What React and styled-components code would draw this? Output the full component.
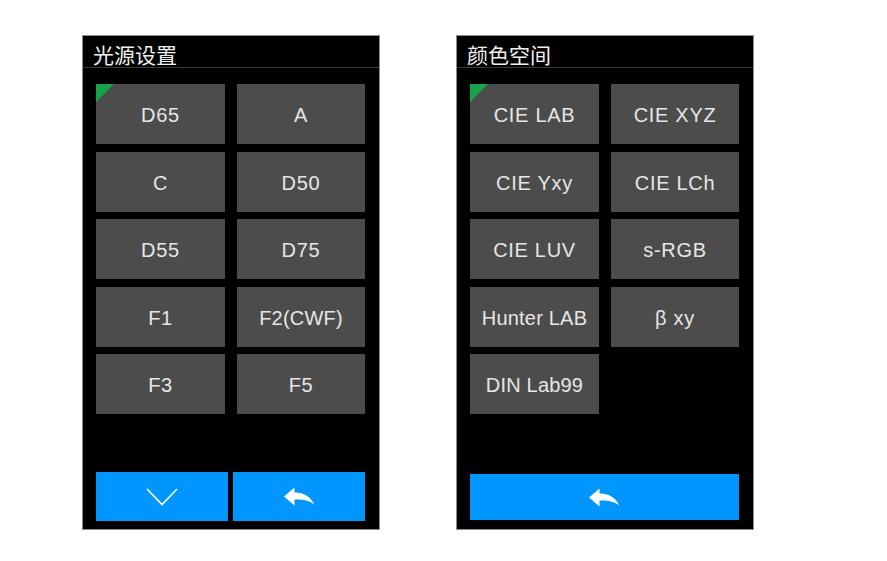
import React from "react";
import styled, { createGlobalStyle } from "styled-components";

const Global = createGlobalStyle`
  html, body { margin: 0; padding: 0; background: #ffffff; }
  body { font-family: "Liberation Sans", Arial, sans-serif; }
`;

const Page = styled.div`
  display: flex;
  gap: 76px;
  padding: 35px 0 0 82px;
`;

const Panel = styled.div`
  width: 296px;
  height: 493px;
  background: #000;
  border: 1px solid #8c8c8c;
  display: flex;
  flex-direction: column;
`;

const Header = styled.div`
  height: 32px;
  box-sizing: border-box;
  border-bottom: 1px solid #3a3a3a;
  display: flex;
  align-items: center;
  padding: 5px 0 0 10px;
  color: #f0f0f0;
  font-family: "Noto Sans CJK SC", "Noto Sans", sans-serif;
  font-size: 21px;
  line-height: 1;
`;

const Grid = styled.div`
  display: grid;
  grid-template-columns: 129px 128px;
  grid-auto-rows: 60px;
  column-gap: 12px;
  row-gap: 7.5px;
  padding: 16px 0 0 13px;
`;

const Cell = styled.div`
  position: relative;
  background: #4c4c4c;
  color: #e6e6e6;
  font-family: "Liberation Sans", Arial, sans-serif;
  font-size: 20px;
  letter-spacing: ${(p) => (p.$tight ? "0.2px" : "0.7px")};
  display: flex;
  align-items: center;
  justify-content: center;
  padding-top: 3px;
  box-sizing: border-box;
  white-space: nowrap;
`;

const Mark = styled.span`
  position: absolute;
  left: 0;
  top: 0;
  width: 0;
  height: 0;
  border-top: 18px solid #17a24b;
  border-right: 18px solid transparent;
`;

const Footer = styled.div`
  margin-top: auto;
  display: grid;
  grid-template-columns: ${(p) => (p.$single ? "1fr" : "1fr 1fr")};
  column-gap: 5px;
  padding: 0 14px ${(p) => (p.$single ? "9px" : "8px")} 13px;
`;

const BlueButton = styled.div`
  height: ${(p) => (p.$single ? "46px" : "49px")};
  background: #0096ff;
  display: flex;
  align-items: center;
  justify-content: center;
`;

const ChevronIcon = () => (
  <svg width="32" height="18" viewBox="0 0 32 18">
    <polyline
      points="1,1 16,16.5 31,1"
      fill="none"
      stroke="#fff"
      strokeWidth="1.6"
    />
  </svg>
);

const ReplyIcon = () => (
  <svg width="31" height="19" viewBox="0 0 31 19">
    <path
      d="M0 9.5 L10.5 0.5 V5.6 C19.5 5.4 26.5 9.5 30.5 17.8 C25.5 13.6 19 12.4 10.5 12.6 V18.5 Z"
      fill="#fff"
    />
  </svg>
);

const lights = ["D65", "A", "C", "D50", "D55", "D75", "F1", "F2(CWF)", "F3", "F5"];
const spaces = [
  "CIE LAB",
  "CIE XYZ",
  "CIE Yxy",
  "CIE LCh",
  "CIE LUV",
  "s-RGB",
  "Hunter LAB",
  "β xy",
  "DIN Lab99",
];

export default function App() {
  return (
    <>
      <Global />
      <Page>
        <Panel>
          <Header>光源设置</Header>
          <Grid>
            {lights.map((l, i) => (
              <Cell key={l} $tight={l.length > 5}>
                {i === 0 && <Mark />}
                {l}
              </Cell>
            ))}
          </Grid>
          <Footer>
            <BlueButton>
              <ChevronIcon />
            </BlueButton>
            <BlueButton>
              <ReplyIcon />
            </BlueButton>
          </Footer>
        </Panel>
        <Panel>
          <Header>颜色空间</Header>
          <Grid>
            {spaces.map((s, i) => (
              <Cell key={s} $tight={s.length > 8}>
                {i === 0 && <Mark />}
                {s}
              </Cell>
            ))}
          </Grid>
          <Footer $single>
            <BlueButton $single>
              <ReplyIcon />
            </BlueButton>
          </Footer>
        </Panel>
      </Page>
    </>
  );
}
